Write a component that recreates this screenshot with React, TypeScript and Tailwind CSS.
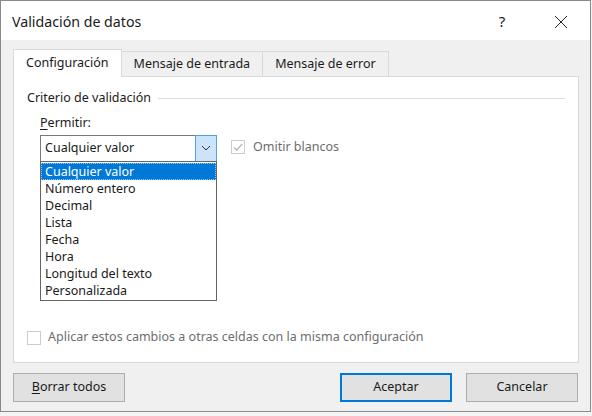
import React from "react";

const font = { fontFamily: '"Noto Sans", "Open Sans", sans-serif' };

const items = [
  "Cualquier valor",
  "Número entero",
  "Decimal",
  "Lista",
  "Fecha",
  "Hora",
  "Longitud del texto",
  "Personalizada",
];

function Chevron() {
  return (
    <svg width="10" height="6" viewBox="0 0 10 6" fill="none">
      <path d="M1 1 L5 5 L9 1" stroke="#333" strokeWidth="1" />
    </svg>
  );
}

function CheckMark({ color }: { color: string }) {
  return (
    <svg width="12" height="12" viewBox="0 0 12 12" fill="none">
      <path d="M2 6.5 L4.8 9.2 L10.2 2.8" stroke={color} strokeWidth="1.3" />
    </svg>
  );
}

export default function App() {
  return (
    <div className="w-[592px] h-[416px] bg-[#f3f3f3] text-[12.5px] text-[#1a1a1a]" style={font}>
      <div className="w-[591px] h-[412px] border border-[#8a8a8a] bg-[#f0f0f0] flex flex-col">
        {/* title bar */}
        <div className="h-[39px] bg-white flex items-center pl-[11px] pt-[2px] shrink-0">
          <span className="text-[14.2px] flex-1 text-[#1a1a1a]">Validación de datos</span>
          <span className="w-[20px] text-center text-[15px] mr-[42px]">?</span>
          <svg className="mr-[22px]" width="14" height="14" viewBox="0 0 14 14">
            <path d="M1 1 L13 13 M13 1 L1 13" stroke="#222" strokeWidth="1" />
          </svg>
        </div>

        {/* body */}
        <div className="flex-1 flex flex-col px-[12px] pt-[9px]">
          {/* tabs */}
          <div className="flex items-end h-[27px] relative z-10">
            <div className="h-[28px] px-[12px] bg-white border border-[#d9d9d9] border-b-0 flex items-center -mb-px">
              Configuración
            </div>
            <div className="h-[25px] px-[12px] bg-[#f0f0f0] border border-[#d9d9d9] border-l-0 border-b-0 flex items-center">
              Mensaje de entrada
            </div>
            <div className="h-[25px] px-[12px] bg-[#f0f0f0] border border-[#d9d9d9] border-l-0 border-b-0 flex items-center">
              Mensaje de error
            </div>
          </div>

          {/* panel */}
          <div className="h-[287px] w-[566px] bg-white border border-[#d9d9d9] flex flex-col px-[13px] pt-[12px]">
            <div className="flex items-center gap-[7px]">
              <span>Criterio de validación</span>
              <div className="flex-1 h-px bg-[#dcdcdc] mt-[1px]" />
            </div>

            <div className="pl-[13px] mt-[6px]">
              <div>
                <span className="underline underline-offset-2">P</span>ermitir:
              </div>
              <div className="flex items-start mt-[2px]">
                <div className="relative">
                  <div className="w-[177px] h-[27px] border border-[#7a7a7a] flex items-stretch">
                    <span className="flex-1 pl-[4px] flex items-center">Cualquier valor</span>
                    <div className="w-[22px] bg-[#cce4f7] border border-[#569de5] flex items-center justify-center -m-px">
                      <Chevron />
                    </div>
                  </div>
                  <div className="absolute left-0 top-[26px] w-[177px] border border-[#646464] bg-white py-px">
                    {items.map((t, i) => (
                      <div
                        key={t}
                        className={
                          i === 0
                            ? "h-[17px] leading-[15px] pl-[3px] bg-[#0078d7] text-white border border-dotted border-[#9fc9ee]"
                            : "h-[17px] leading-[17px] pl-[4px]"
                        }
                      >
                        {t}
                      </div>
                    ))}
                  </div>
                </div>
                <div className="flex items-center ml-[14px] mt-[3px] text-[#6d6d6d]">
                  <div className="w-[14px] h-[14px] border border-[#cccccc] flex items-center justify-center">
                    <CheckMark color="#b5b5b5" />
                  </div>
                  <span className="ml-[8px]">Omitir blancos</span>
                </div>
              </div>
            </div>

            <div className="flex-1" />
            <div className="flex items-center text-[#6d6d6d] mb-[15px]">
              <div className="w-[14px] h-[14px] border border-[#cccccc]" />
              <span className="ml-[7px]">Aplicar estos cambios a otras celdas con la misma configuración</span>
            </div>
          </div>

          {/* buttons */}
          <div className="flex mt-[10px] h-[29px]">
            <div className="w-[112px] bg-[#e1e1e1] border border-[#adadad] flex items-center justify-center">
              <span>
                <span className="underline underline-offset-2">B</span>orrar todos
              </span>
            </div>
            <div className="flex-1" />
            <div className="w-[112px] bg-[#e1e1e1] border-2 border-[#0078d7] flex items-center justify-center">
              Aceptar
            </div>
            <div className="w-[112px] ml-[14px] bg-[#e1e1e1] border border-[#adadad] flex items-center justify-center">
              Cancelar
            </div>
          </div>
        </div>
      </div>
    </div>
  );
}
